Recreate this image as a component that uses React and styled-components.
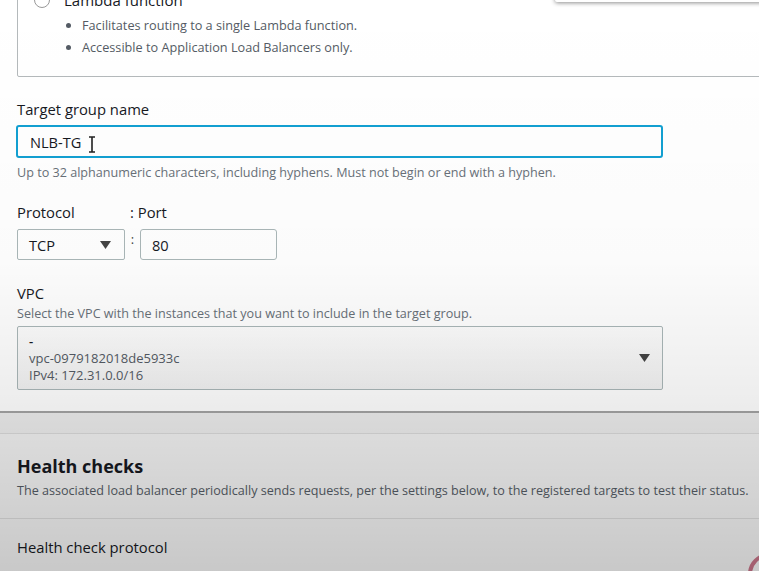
import React from 'react';
import styled, { createGlobalStyle } from 'styled-components';

const GlobalStyle = createGlobalStyle`
  html, body {
    margin: 0;
    padding: 0;
    background: #ffffff;
    font-family: "Open Sans", "Noto Sans", sans-serif;
    color: #16191f;
  }
`;

const Page = styled.div`
  position: relative;
  width: 759px;
  height: 571px;
  overflow: hidden;
  background: #ffffff;
  display: flex;
  flex-direction: column;
`;

const Shade = styled.div`
  position: absolute;
  inset: 0;
  pointer-events: none;
  background: linear-gradient(
    to bottom,
    rgba(0, 0, 0, 0) 0px,
    rgba(0, 0, 0, 0.015) 260px,
    rgba(0, 0, 0, 0.07) 400px,
    rgba(0, 0, 0, 0.17) 571px
  );
`;

const MenuEdge = styled.div`
  position: absolute;
  top: -20px;
  left: 555px;
  width: 220px;
  height: 22px;
  background: #fff;
  border-radius: 2px;
  box-shadow: 0 1px 4px rgba(0, 0, 0, 0.45);
`;

const RecordDot = styled.div`
  position: absolute;
  left: 748px;
  top: 553px;
  width: 34px;
  height: 34px;
  border-radius: 50%;
  border: 4px solid #b9536c;
  opacity: 0.8;
`;

const FormPanel = styled.section`
  padding: 0 0 21px 17px;
  border-bottom: 2px solid #a3a3a3;
`;

const OptionCard = styled.div`
  margin-top: -15px;
  margin-right: -6px;
  border: 1px solid #b4b9bb;
  border-radius: 2px;
  padding: 0 0 18px 16px;
`;

const RadioRow = styled.div`
  display: flex;
  align-items: center;
  gap: 14px;
  height: 28px;
  font-size: 15px;
  color: #16191f;
`;

const Radio = styled.span`
  width: 14px;
  height: 14px;
  border-radius: 50%;
  border: 1px solid #999;
  background: #fff;
`;

const Bullets = styled.ul`
  margin: 0;
  padding-left: 48px;
  font-size: 12.7px;
  line-height: 22px;
  color: #545b64;
`;

const Field = styled.div`
  display: flex;
  flex-direction: column;
  margin-top: ${p => p.$top || 0}px;
`;

const Label = styled.div`
  font-size: 14.8px;
  line-height: 20px;
  color: #16191f;
`;

const Hint = styled.div`
  font-size: 12.6px;
  line-height: 18px;
  margin-top: ${p => p.$top || 0}px;
  color: #687078;
`;

const TextInput = styled.div`
  box-sizing: border-box;
  width: ${p => p.$width}px;
  height: ${p => (p.$focused ? 33 : 31)}px;
  margin: ${p => (p.$focused ? '6px 0 6px -1px' : '0')};
  border: ${p => (p.$focused ? '2px solid #12a0d2' : '1px solid #aab7b8')};
  border-radius: 3px;
  display: flex;
  align-items: center;
  padding-left: ${p => (p.$focused ? 12 : 11)}px;
  font-size: 14.6px;
  color: #16191f;
  background: #fff;
`;

const Caret = styled.svg`
  margin-left: 7px;
  margin-top: 6px;
`;

const PortLabels = styled.div`
  display: flex;
  margin-bottom: 7px;
`;

const PortLabel = styled(Label)`
  width: ${p => p.$width}px;
`;

const ControlRow = styled.div`
  display: flex;
  align-items: flex-start;
`;

const Select = styled.div`
  box-sizing: border-box;
  width: 108px;
  height: 31px;
  border: 1px solid #aab7b8;
  border-radius: 2px;
  display: flex;
  align-items: center;
  justify-content: space-between;
  padding: 0 13px 0 11px;
  font-size: 14.6px;
  background: #fff;
`;

const Colon = styled.span`
  width: 15px;
  text-align: center;
  font-size: 13px;
  line-height: 20px;
  color: #444;
`;

const VpcBox = styled.div`
  box-sizing: border-box;
  width: 646px;
  height: 64px;
  margin-top: 3px;
  border: 1px solid #aab7b8;
  border-radius: 2px;
  background: linear-gradient(#fdfdfd, #f2f2f2);
  display: flex;
  align-items: center;
  justify-content: space-between;
  padding: 0 12px 0 11px;
`;

const VpcLines = styled.div`
  font-size: 13px;
  line-height: 17px;
  color: #545b64;
`;

const Dash = styled.div`
  color: #16191f;
  font-weight: 600;
`;

const Gap = styled.div`
  height: 20px;
  background: #ececec;
  border-bottom: 1px solid #dadada;
`;

const HealthPanel = styled.section`
  flex: 1;
  background: #f1f1f1;
`;

const PanelHeader = styled.div`
  padding: 20px 0 18px 17px;
  border-bottom: 1px solid #dadada;
`;

const Title = styled.h2`
  margin: 0 0 4px;
  font-size: 18px;
  line-height: 24px;
  font-weight: 700;
  color: #16191f;
`;

const Description = styled.div`
  font-size: 12.6px;
  line-height: 18px;
  color: #545b64;
`;

const PanelBody = styled.div`
  padding: 18px 0 0 17px;
  font-size: 14.8px;
  color: #16191f;
`;

const Arrow = () => (
  <svg width="11" height="8" viewBox="0 0 11 8">
    <path d="M0 0 H11 L5.5 8 Z" fill="#444" />
  </svg>
);

export default function App() {
  return (
    <Page>
      <GlobalStyle />
      <FormPanel>
        <OptionCard>
          <RadioRow>
            <Radio />
            <span>Lambda function</span>
          </RadioRow>
          <Bullets>
            <li>Facilitates routing to a single Lambda function.</li>
            <li>Accessible to Application Load Balancers only.</li>
          </Bullets>
        </OptionCard>

        <Field $top={22}>
          <Label>Target group name</Label>
          <TextInput $width={647} $focused>
            NLB-TG
            <Caret width="8" height="17" viewBox="0 0 8 17">
              <path d="M1 1 H7 M4 1 V16 M1 16 H7" stroke="#222" strokeWidth="1.6" fill="none" />
            </Caret>
          </TextInput>
          <Hint>Up to 32 alphanumeric characters, including hyphens. Must not begin or end with a hyphen.</Hint>
        </Field>

        <Field $top={20}>
          <PortLabels>
            <PortLabel $width={113}>Protocol</PortLabel>
            <Label>: Port</Label>
          </PortLabels>
          <ControlRow>
            <Select>
              TCP
              <Arrow />
            </Select>
            <Colon>:</Colon>
            <TextInput $width={137}>80</TextInput>
          </ControlRow>
        </Field>

        <Field $top={23}>
          <Label>VPC</Label>
          <Hint $top={2}>Select the VPC with the instances that you want to include in the target group.</Hint>
          <VpcBox>
            <VpcLines>
              <Dash>-</Dash>
              <div>vpc-0979182018de5933c</div>
              <div>IPv4: 172.31.0.0/16</div>
            </VpcLines>
            <Arrow />
          </VpcBox>
        </Field>
      </FormPanel>

      <Gap />

      <HealthPanel>
        <PanelHeader>
          <Title>Health checks</Title>
          <Description>
            The associated load balancer periodically sends requests, per the settings below, to the registered targets to test their status.
          </Description>
        </PanelHeader>
        <PanelBody>Health check protocol</PanelBody>
      </HealthPanel>

      <MenuEdge />
      <RecordDot />
      <Shade />
    </Page>
  );
}
